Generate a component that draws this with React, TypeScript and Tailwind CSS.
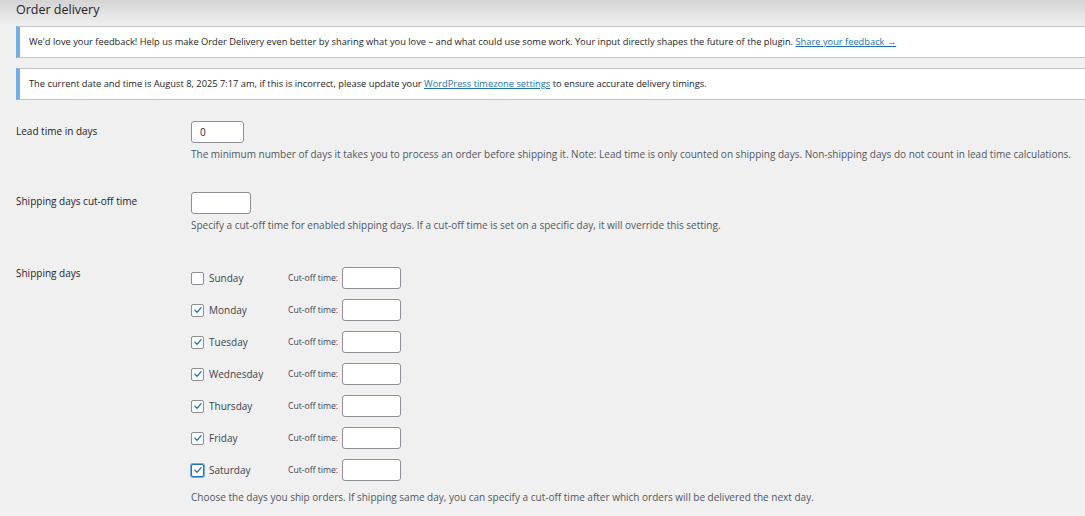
import React from "react";

const days = [
  { name: "Sunday", checked: false },
  { name: "Monday", checked: true },
  { name: "Tuesday", checked: true },
  { name: "Wednesday", checked: true },
  { name: "Thursday", checked: true },
  { name: "Friday", checked: true },
  { name: "Saturday", checked: true, focus: true },
];

const Check = ({ checked, focus }: { checked: boolean; focus?: boolean }) => (
  <span
    className={
      "flex h-[13px] w-[13px] items-center justify-center rounded-[2px] bg-white " +
      (focus ? "border-[1.5px] border-[#2271b1] shadow-[0_0_0_1px_#72aee6]" : "border border-[#8c8f94]")
    }
  >
    {checked && (
      <svg viewBox="0 0 12 12" className="h-[10px] w-[10px]">
        <path d="M2.2 6.2 L4.9 8.8 L9.8 3.2" fill="none" stroke="#2271b1" strokeWidth="1.6" strokeLinecap="round" strokeLinejoin="round" />
      </svg>
    )}
  </span>
);

const Notice = ({ children }: { children: React.ReactNode }) => (
  <div className="flex h-[32px] items-center border border-r-0 border-l-4 border-[#c3c4c7] border-l-[#72aee6] bg-white pl-[9px] text-[9.3px] text-[#1d2327]">
    {children}
  </div>
);

export default function App() {
  return (
    <div
      className="min-h-[516px] w-[1085px] overflow-hidden bg-[#f0f0f1] text-[#1d2327]"
      style={{ fontFamily: '"Open Sans", "Noto Sans", sans-serif' }}
    >
      <div className="h-[26px] bg-gradient-to-b from-[#d4d4d5] to-[#f0f0f1] pl-4 pt-[1px]">
        <h1 className="text-[12.5px] leading-[17px]">Order delivery</h1>
      </div>

      <div className="flex flex-col gap-[10px] pl-4">
        <Notice>
          <span>
            We'd love your feedback! Help us make Order Delivery even better by sharing what you love – and what could use some work.
            Your input directly shapes the future of the plugin.{" "}
            <span className="text-[#2271b1] underline">Share your feedback →</span>
          </span>
        </Notice>
        <Notice>
          <span>
            The current date and time is August 8, 2025 7:17 am, if this is incorrect, please update your{" "}
            <span className="text-[#2271b1] underline">WordPress timezone settings</span> to ensure accurate delivery timings.
          </span>
        </Notice>
      </div>

      <div className="pl-4 pt-[21px] text-[10px]">
        <div className="flex">
          <div className="w-[175px] pt-[3px] font-medium">Lead time in days</div>
          <div className="flex flex-col">
            <div className="flex h-[22px] w-[53px] items-center rounded-[3px] border border-[#8c8f94] bg-white pl-[8px]">0</div>
            <p className="mt-[4px] text-[#50575e]">
              The minimum number of days it takes you to process an order before shipping it. Note: Lead time is only counted on shipping
              days. Non-shipping days do not count in lead time calculations.
            </p>
          </div>
        </div>

        <div className="mt-[30px] flex">
          <div className="w-[175px] pt-[2px] font-medium">Shipping days cut-off time</div>
          <div className="flex flex-col">
            <div className="h-[22px] w-[60px] rounded-[3px] border border-[#8c8f94] bg-white" />
            <p className="mt-[4px] text-[#50575e]">
              Specify a cut-off time for enabled shipping days. If a cut-off time is set on a specific day, it will override this setting.
            </p>
          </div>
        </div>

        <div className="mt-[32px] flex">
          <div className="w-[175px] pt-[1px] font-medium">Shipping days</div>
          <div className="flex flex-col">
            <div className="flex flex-col gap-[10px] pt-[2px]">
              {days.map((d) => (
                <div key={d.name} className="flex h-[22px] items-center">
                  <Check checked={d.checked} focus={d.focus} />
                  <span className="ml-[5px] w-[79px] text-[#3c434a]">{d.name}</span>
                  <span className="w-[54px] text-[8.6px] text-[#3c434a]">Cut-off time:</span>
                  <div className="h-[22px] w-[59px] rounded-[3px] border border-[#8c8f94] bg-white" />
                </div>
              ))}
            </div>
            <p className="mt-[9px] text-[#50575e]">
              Choose the days you ship orders. If shipping same day, you can specify a cut-off time after which orders will be delivered the
              next day.
            </p>
          </div>
        </div>
      </div>
    </div>
  );
}
